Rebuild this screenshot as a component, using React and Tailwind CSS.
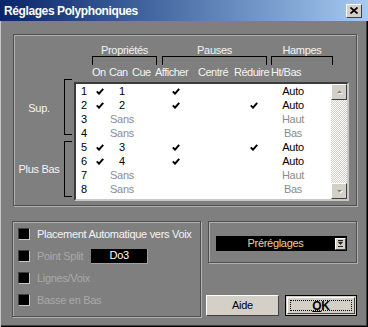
import React from 'react';

const rows = [
  { n: 1, on: true, can: '1', aff: true, red: false, ht: 'Auto' },
  { n: 2, on: true, can: '2', aff: true, red: true, ht: 'Auto' },
  { n: 3, on: false, can: 'Sans', aff: false, red: false, ht: 'Haut' },
  { n: 4, on: false, can: 'Sans', aff: false, red: false, ht: 'Bas' },
  { n: 5, on: true, can: '3', aff: true, red: true, ht: 'Auto' },
  { n: 6, on: true, can: '4', aff: true, red: false, ht: 'Auto' },
  { n: 7, on: false, can: 'Sans', aff: false, red: false, ht: 'Haut' },
  { n: 8, on: false, can: 'Sans', aff: false, red: false, ht: 'Bas' },
];

const Check = () => (
  <svg width="8" height="7" viewBox="0 0 8 7">
    <path d="M0.8 3.4 L3 5.7 L7.2 0.9" stroke="#000" strokeWidth="1.9" fill="none" />
  </svg>
);

const Arrow = ({ down }) => (
  <svg width="9" height="6" viewBox="0 0 9 6">
    {down ? (
      <>
        <path d="M2 2 L7 2 L4.5 4.5 Z" fill="#fff" transform="translate(1 1)" />
        <path d="M2 2 L7 2 L4.5 4.5 Z" fill="#808080" />
      </>
    ) : (
      <>
        <path d="M2 4 L7 4 L4.5 1.5 Z" fill="#fff" transform="translate(1 1)" />
        <path d="M2 4 L7 4 L4.5 1.5 Z" fill="#808080" />
      </>
    )}
  </svg>
);

const Box = ({ label, disabled, children }) => (
  <div className="flex items-center h-[22px] pl-[5px]">
    <div className="w-[12px] h-[12px] bg-black border border-t-[#404040] border-l-[#404040] border-r-[#c8c8c8] border-b-[#c8c8c8]" />
    <span className={`ml-[7px] whitespace-nowrap ${disabled ? 'text-[#a9a9a9]' : 'text-[#f4f4f4]'}`}>{label}</span>
    {children}
  </div>
);

const etched = 'border border-[#4f4f4f] shadow-[inset_1px_1px_0_#b0b0b0,1px_1px_0_#b0b0b0]';
const raised = 'bg-[#d4d0c8] border border-t-white border-l-white border-r-[#404040] border-b-[#404040]';

export default function App() {
  return (
    <div className="w-[368px] h-[327px] bg-[#7f7f7f] font-['Liberation_Sans',Arial,sans-serif] text-[11px] tracking-[-0.3px] flex flex-col overflow-hidden shadow-[inset_1px_0_0_#c8c8c8,inset_-1px_-1px_0_#000,inset_-2px_-2px_0_#404040]">
      <div className="h-[21px] shrink-0 flex items-center justify-between pl-[4px] pr-[6px] bg-linear-to-r from-[#0a246a] to-[#a6caf0]">
        <span className="text-white font-bold text-[12px] tracking-[-0.4px]">Réglages Polyphoniques</span>
        <div className={`w-[16px] h-[14px] flex items-center justify-center ${raised}`}>
          <svg width="8" height="7" viewBox="0 0 8 7">
            <path d="M0.5 0.5 L7.5 6.5 M7.5 0.5 L0.5 6.5" stroke="#000" strokeWidth="1.7" />
          </svg>
        </div>
      </div>

      <div className={`mt-[13px] ml-[13px] w-[344px] h-[172px] shrink-0 flex flex-col pt-[9px] text-[#f4f4f4] ${etched}`}>
        <div className="flex ml-[78px]">
          <div className="w-[65px]">
            <div className="text-center leading-[12px]">Propriétés</div>
            <div className="h-[9px] border-t border-x border-black" />
          </div>
          <div className="w-[105px] ml-[5px]">
            <div className="text-center leading-[12px]">Pauses</div>
            <div className="h-[9px] border-t border-x border-black" />
          </div>
          <div className="w-[62px] ml-[4px]">
            <div className="text-center leading-[12px]">Hampes</div>
            <div className="h-[9px] border-t border-x border-black" />
          </div>
        </div>

        <div className="flex ml-[78px] leading-[14px] whitespace-nowrap tracking-[-0.5px]">
          <span className="w-[17px]">On</span>
          <span className="w-[23px]">Can</span>
          <span className="w-[23px]">Cue</span>
          <span className="w-[43px]">Afficher</span>
          <span className="w-[36px]">Centré</span>
          <span className="w-[37px]">Réduire</span>
          <span>Ht/Bas</span>
        </div>

        <div className="flex">
          <div className="flex flex-col gap-[6px]">
            <div className="flex h-[56px]">
              <div className="w-[50px] flex items-center justify-center pt-[3px]">Sup.</div>
              <div className="w-[8px] border-l border-y border-black" />
            </div>
            <div className="flex h-[56px]">
              <div className="w-[50px] flex items-center justify-center">Plus Bas</div>
              <div className="w-[8px] border-l border-y border-black" />
            </div>
          </div>

          <div className="ml-[2px] mt-[3px] w-[275px] h-[119px] flex border-2 border-t-[#3c3c3c] border-l-[#3c3c3c] border-r-[#c8c8c8] border-b-[#c8c8c8]">
            <div className="w-[255px] bg-white">
              {rows.map((r) => (
                <div key={r.n} className="flex h-[14px] items-center pl-[5px] text-black">
                  <span className="w-[11px]">{r.n}</span>
                  <span className="w-[16px] flex justify-center">{r.on && <Check />}</span>
                  <span className={`w-[28px] text-center ${r.can === 'Sans' ? 'text-[#8c8c8c]' : ''}`}>{r.can}</span>
                  <span className="w-[19px]" />
                  <span className="w-[42px] flex justify-center">{r.aff && <Check />}</span>
                  <span className="w-[39px]" />
                  <span className="w-[36px] flex justify-center">{r.red && <Check />}</span>
                  <span className={`w-[42px] text-center ${r.ht === 'Auto' ? '' : 'text-[#8c8c8c]'}`}>{r.ht}</span>
                </div>
              ))}
            </div>
            <div className="w-[16px] flex flex-col">
              <div className={`h-[16px] flex items-center justify-center ${raised}`}>
                <Arrow />
              </div>
              <div className="flex-1 bg-[repeating-conic-gradient(#ffffff_0_25%,#d4d0c8_0_50%)] bg-[length:2px_2px]" />
              <div className={`h-[16px] flex items-center justify-center ${raised}`}>
                <Arrow down />
              </div>
            </div>
          </div>
        </div>
      </div>

      <div className="flex mt-[15px] ml-[12px]">
        <div className={`w-[189px] h-[96px] pt-[1px] flex flex-col ${etched}`}>
          <Box label="Placement Automatique vers Voix" />
          <Box label="Point Split" disabled>
            <div className="ml-[8px] w-[57px] h-[15px] bg-black text-white flex items-center justify-center border-r border-b border-[#a0a0a0]">
              Do3
            </div>
          </Box>
          <Box label="Lignes/Voix" disabled />
          <Box label="Basse en Bas" disabled />
        </div>

        <div className="ml-[7px] w-[149px] flex flex-col">
          <div className={`h-[42px] pl-[7px] pt-[14px] ${etched}`}>
            <div className="w-[131px] h-[15px] bg-black flex items-center">
              <span className="flex-1 text-center text-[#ecd48a]">Préréglages</span>
              <div className={`w-[11px] h-[12px] mr-[1px] flex items-center justify-center ${raised}`}>
                <svg width="5" height="7" viewBox="0 0 5 7">
                  <path d="M0 0 H5 V1.2 H0 Z M0 2 H5 L2.5 5 Z M0 6 H5 V7 H0 Z" fill="#202020" />
                </svg>
              </div>
            </div>
          </div>
          <div className="flex -ml-[2px] mt-[32px] gap-[6px]">
            <button className={`w-[73px] h-[21px] text-black ${raised}`}>Aide</button>
            <button className="w-[72px] h-[21px] bg-[#d4d0c8] border border-black p-[1px]">
              <div className="w-full h-full border border-t-white border-l-white border-r-[#404040] border-b-[#404040] p-[2px]">
                <div className="w-full h-full border border-dotted border-black flex items-center justify-center font-bold text-black text-[12px]">
                  <span className="underline">O</span>K
                </div>
              </div>
            </button>
          </div>
        </div>
      </div>
    </div>
  );
}
